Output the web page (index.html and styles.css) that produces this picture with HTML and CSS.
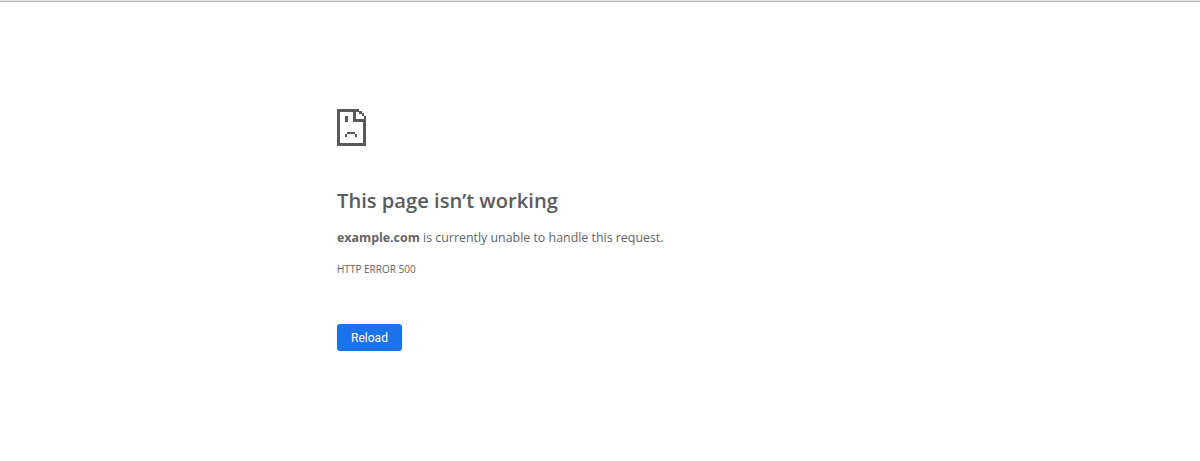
FILE: index.html
```html
<!DOCTYPE html>
<html lang="en">
<head>
<meta charset="utf-8">
<title>example.com</title>
<link rel="stylesheet" href="styles.css">
</head>
<body>
<div class="topline"></div>
<main class="content">
  <svg class="icon" width="30" height="37" viewBox="0 0 30 37" shape-rendering="crispEdges" aria-hidden="true">
    <path fill="#58595b" d="M0 0h19v3H3v31h23V13h3v24H0z"/>
    <path fill="#58595b" d="M16 0h3v10h10v3H16z"/>
    <path fill="#58595b" d="M19 0h3v3h-3zM22 2h3v3h-3zM25 4h2v3h-2zM27 7h2v3h-2z"/>
    <path fill="#58595b" d="M8 7h3v6H8zM10 23h8v2h-8zM8 25h2v3H8zM18 25h2v3h-2z"/>
  </svg>
  <h1 class="title">This page isn’t working</h1>
  <p class="message"><strong>example.com</strong> is currently unable to handle this request.</p>
  <p class="code">HTTP ERROR 500</p>
  <button class="reload" type="button">Reload</button>
</main>
</body>
</html>
```
FILE: styles.css
```css
html, body {
  margin: 0;
  padding: 0;
  background: #fff;
}
body {
  height: 461px;
  overflow: hidden;
  font-family: "Open Sans", "Noto Sans", sans-serif;
  color: #5f6368;
}
.topline {
  height: 1px;
  background: #b3b3b3;
  border-top: 1px solid #e6e6e6;
}
.content {
  width: 600px;
  margin-left: 337px;
  padding-top: 107px;
  display: flex;
  flex-direction: column;
  align-items: flex-start;
}
.icon {
  display: block;
}
.title {
  margin: 40px 0 0;
  font-size: 20.15px;
  line-height: 28px;
  font-weight: 600;
  color: #5a5b60;
}
.message {
  margin: 14px 0 0;
  font-size: 12.4px;
  line-height: 20px;
}
.message strong {
  font-weight: 700;
}
.code {
  margin: 13px 0 0;
  font-size: 10px;
  line-height: 16px;
}
.reload {
  margin-top: 47px;
  width: 65px;
  height: 27px;
  padding: 0;
  border: 0;
  border-radius: 3px;
  background: #1a73e8;
  color: #fff;
  font-family: Roboto, "Liberation Sans", sans-serif;
  font-size: 12px;
  font-weight: 400;
}
```
